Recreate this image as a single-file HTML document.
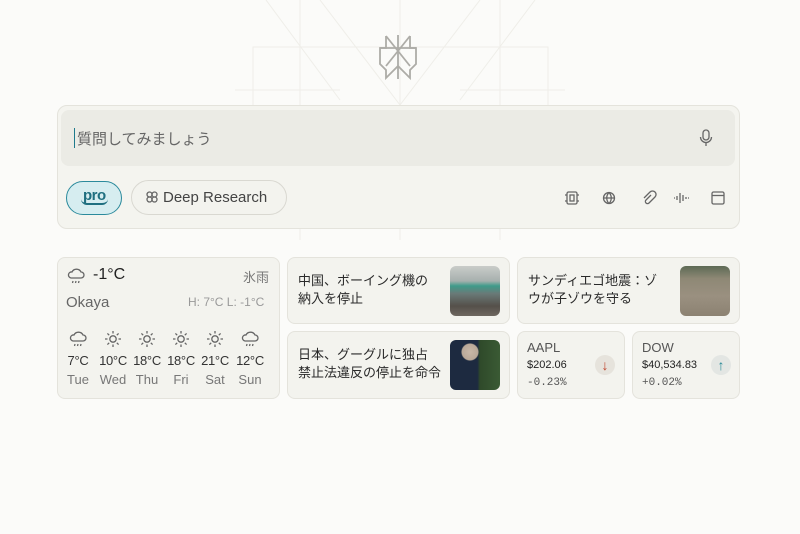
<!DOCTYPE html>
<html><head><meta charset="utf-8"><style>
*{margin:0;padding:0;box-sizing:border-box}
body{width:800px;height:534px;background:#fbfbf9;font-family:"Liberation Sans","Noto Sans CJK JP",sans-serif;position:relative;overflow:hidden;color:#222}
.abs{position:absolute}
.card{position:absolute;background:#f3f3ee;border:1px solid #e4e3dc;border-radius:8px}
.ntext{position:absolute;left:10px;font-size:13px;line-height:18px;color:#2a2a2a}
.img{position:absolute;width:50px;height:50px;border-radius:6px}
.ico{stroke:#666;fill:none;stroke-width:1.3}
.fc{position:absolute;top:330px;width:34px;text-align:center}
.fc svg{display:block;margin:0 auto}
.fc .t{font-size:13px;color:#333;margin-top:5px;white-space:nowrap;letter-spacing:-0.3px}
.fc .d{font-size:13px;color:#777;margin-top:4px}
</style></head><body>
<svg class="abs" style="left:0;top:0" width="800" height="240">
<g stroke="#efeee9" fill="none" stroke-width="1">
<line x1="266" y1="0" x2="340" y2="100"/><line x1="535" y1="0" x2="460" y2="100"/>
<line x1="300" y1="0" x2="300" y2="105"/><line x1="500" y1="0" x2="500" y2="105"/>
<line x1="400" y1="0" x2="400" y2="105"/>
<rect x="253" y="47" width="295" height="60"/>
<line x1="235" y1="90" x2="340" y2="90"/><line x1="460" y1="90" x2="565" y2="90"/>
<line x1="320" y1="0" x2="400" y2="105"/><line x1="480" y1="0" x2="400" y2="105"/>
<line x1="400" y1="228" x2="400" y2="240"/><line x1="300" y1="228" x2="300" y2="240"/><line x1="500" y1="228" x2="500" y2="240"/>
</g>
<g stroke="#adaca7" fill="none" stroke-width="1.8">
<line x1="398" y1="35" x2="398" y2="79"/>
<line x1="386" y1="36" x2="410" y2="66"/><line x1="410" y1="36" x2="386" y2="66"/>
<path d="M386 36 V48 H380 V64 L386 70 V78 L398 66 L410 78 V70 L416 64 V48 H410 V36"/>
<line x1="380" y1="48" x2="416" y2="48"/>
</g>
</svg>
<div class="card" style="left:57px;top:105px;width:683px;height:124px;border-radius:10px;background:#f4f4ef"></div>
<div class="abs" style="left:61px;top:110px;width:674px;height:56px;background:#ebebe5;border-radius:8px"></div>
<div class="abs" style="left:74px;top:128px;width:1px;height:20px;background:#1f7a8c"></div>
<div class="abs" style="left:77px;top:128px;font-size:15px;color:#666">質問してみましょう</div>
<svg class="abs" style="left:698px;top:129px" width="16" height="18"><g class="ico"><rect x="5" y="1" width="6" height="10" rx="3"/><path d="M2.5 8a5.5 5.5 0 0 0 11 0M8 13.5V17"/></g></svg>
<div class="abs" style="left:66px;top:181px;width:56px;height:34px;border:1px solid #2b8a9c;border-radius:17px;background:#d6edf0"></div>
<div class="abs" style="left:81px;top:188px;font-size:15px;font-weight:bold;color:#1f6f80;border-bottom:2px solid #1f6f80;line-height:15px;border-radius:0 0 6px 6px;padding:0 2px;letter-spacing:-0.5px">pro</div>
<div class="abs" style="left:131px;top:180px;width:156px;height:35px;border:1px solid #d9d8d1;border-radius:18px;background:#f3f3ee"></div>
<svg class="abs" style="left:146px;top:191px" width="12" height="12"><g class="ico"><circle cx="3.5" cy="3.5" r="2.5"/><circle cx="8.5" cy="3.5" r="2.5"/><circle cx="3.5" cy="8.5" r="2.5"/><circle cx="8.5" cy="8.5" r="2.5"/></g></svg>
<div class="abs" style="left:163px;top:189px;font-size:15px;color:#444">Deep Research</div>
<svg class="abs" style="left:563px;top:189px" width="170" height="18"><g class="ico">
<rect x="4" y="3" width="10" height="12" rx="1.5"/><rect x="7" y="6" width="4" height="6"/><path d="M2 6h2M2 12h2M14 6h2M14 12h2"/>
<circle cx="46" cy="9" r="5.5"/><path d="M40.5 9h11M46 3.5c-3 3-3 8 0 11M46 3.5c3 3 3 8 0 11"/>
<path d="M88 6l-5 5a2 2 0 0 0 3 3l6-6a3.5 3.5 0 0 0-5-5l-6 6"/>
<path d="M114 7v4M117 4v10M120 6v6M123 8v2M111 9h1M125 9h1"/>
<rect x="149" y="3" width="12" height="12" rx="1.5"/><path d="M149 6.5h12"/>
</g></svg>

<div class="card" style="left:57px;top:257px;width:223px;height:142px"></div>
<svg class="abs" style="left:67px;top:267px" width="18" height="18"><g class="ico"><path d="M4 11h10a3 3 0 0 0 0-6a5 5 0 0 0-9 0a3 3 0 0 0-1 6z"/><path d="M6 14l-.5 2M9 14l-.5 2M12 14l-.5 2"/></g></svg>
<div class="abs" style="left:93px;top:266px;font-size:16px;color:#222">-1°C</div>
<div class="abs" style="left:243px;top:267px;font-size:13px;color:#777">氷雨</div>
<div class="abs" style="left:66px;top:294px;font-size:15px;color:#666">Okaya</div>
<div class="abs" style="left:188px;top:295px;font-size:12px;color:#999">H: 7°C L: -1°C</div>

<div class="fc" style="left:61px"><svg width="18" height="18"><g class="ico"><path d="M4 11h10a3 3 0 0 0 0-6a5 5 0 0 0-9 0a3 3 0 0 0-1 6z"/><path d="M6 14l-.5 2M9 14l-.5 2M12 14l-.5 2"/></g></svg><div class="t">7°C</div><div class="d">Tue</div></div>
<div class="fc" style="left:96px"><svg width="18" height="18"><g class="ico" transform="translate(9,9)"><circle r="3.2"/><path d="M0-8v2.5M0 8v-2.5M-8 0h2.5M8 0h-2.5M-5.6-5.6l1.8 1.8M5.6 5.6l-1.8-1.8M-5.6 5.6l1.8-1.8M5.6-5.6l-1.8 1.8"/></g></svg><div class="t">10°C</div><div class="d">Wed</div></div>
<div class="fc" style="left:130px"><svg width="18" height="18"><g class="ico" transform="translate(9,9)"><circle r="3.2"/><path d="M0-8v2.5M0 8v-2.5M-8 0h2.5M8 0h-2.5M-5.6-5.6l1.8 1.8M5.6 5.6l-1.8-1.8M-5.6 5.6l1.8-1.8M5.6-5.6l-1.8 1.8"/></g></svg><div class="t">18°C</div><div class="d">Thu</div></div>
<div class="fc" style="left:164px"><svg width="18" height="18"><g class="ico" transform="translate(9,9)"><circle r="3.2"/><path d="M0-8v2.5M0 8v-2.5M-8 0h2.5M8 0h-2.5M-5.6-5.6l1.8 1.8M5.6 5.6l-1.8-1.8M-5.6 5.6l1.8-1.8M5.6-5.6l-1.8 1.8"/></g></svg><div class="t">18°C</div><div class="d">Fri</div></div>
<div class="fc" style="left:198px"><svg width="18" height="18"><g class="ico" transform="translate(9,9)"><circle r="3.2"/><path d="M0-8v2.5M0 8v-2.5M-8 0h2.5M8 0h-2.5M-5.6-5.6l1.8 1.8M5.6 5.6l-1.8-1.8M-5.6 5.6l1.8-1.8M5.6-5.6l-1.8 1.8"/></g></svg><div class="t">21°C</div><div class="d">Sat</div></div>
<div class="fc" style="left:233px"><svg width="18" height="18"><g class="ico"><path d="M4 11h10a3 3 0 0 0 0-6a5 5 0 0 0-9 0a3 3 0 0 0-1 6z"/><path d="M6 14l-.5 2M9 14l-.5 2M12 14l-.5 2"/></g></svg><div class="t">12°C</div><div class="d">Sun</div></div>

<div class="card" style="left:287px;top:257px;width:223px;height:67px"><div class="ntext" style="top:14px">中国、ボーイング機の<br>納入を停止</div><div class="img" style="left:162px;top:8px;background:linear-gradient(180deg,#c9ccc9 0%,#a7b0ae 30%,#3f9b8a 40%,#6a7a78 55%,#55504a 80%,#6e6760 100%)"></div></div>
<div class="card" style="left:287px;top:331px;width:223px;height:68px"><div class="ntext" style="top:14px">日本、グーグルに独占<br>禁止法違反の停止を命令</div><div class="img" style="left:162px;top:8px;background:radial-gradient(circle at 20px 12px,#c9b8a8 0,#b9a898 8px,transparent 9px),linear-gradient(90deg,#1d2a40 0%,#1d2a40 55%,#2f4a2a 60%,#3a5a34 100%)"></div></div>
<div class="card" style="left:517px;top:257px;width:223px;height:67px"><div class="ntext" style="top:14px">サンディエゴ地震：ゾ<br>ウが子ゾウを守る</div><div class="img" style="left:162px;top:8px;background:linear-gradient(180deg,#5d6a55 0%,#8e8875 25%,#9a9080 60%,#8c8272 100%)"></div></div>

<div class="card" style="left:517px;top:331px;width:108px;height:68px">
<div class="abs" style="left:9px;top:8px;font-size:13px;color:#555">AAPL</div>
<div class="abs" style="left:9px;top:27px;font-size:11px;color:#222">$202.06</div>
<div class="abs" style="left:9px;top:45px;font-size:11px;color:#555;font-family:'Liberation Mono',monospace">-0.23%</div>
<div class="abs" style="left:77px;top:23px;width:20px;height:20px;border-radius:10px;background:#e6e3dc;color:#c0452e;font-size:14px;text-align:center;line-height:20px">↓</div></div>
<div class="card" style="left:632px;top:331px;width:108px;height:68px">
<div class="abs" style="left:9px;top:8px;font-size:13px;color:#555">DOW</div>
<div class="abs" style="left:9px;top:27px;font-size:11px;color:#222">$40,534.83</div>
<div class="abs" style="left:9px;top:45px;font-size:11px;color:#555;font-family:'Liberation Mono',monospace">+0.02%</div>
<div class="abs" style="left:78px;top:23px;width:20px;height:20px;border-radius:10px;background:#e3e6e3;color:#2a8a96;font-size:14px;text-align:center;line-height:20px">↑</div></div>
</body></html>
